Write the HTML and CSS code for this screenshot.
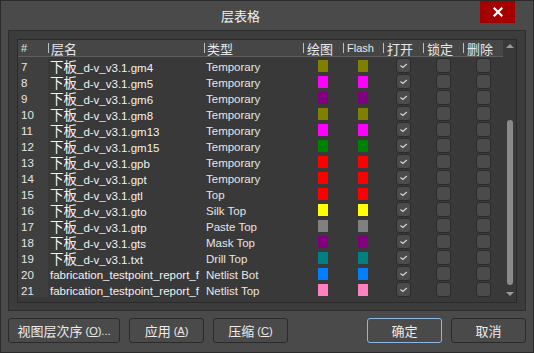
FILE: index.html
```html
<!DOCTYPE html>
<html>
<head>
<meta charset="utf-8">
<link rel="stylesheet" href="styles.css">
</head>
<body>
<div class="window">
  <div class="titlebar">
    <div class="title">层表格</div>
    <div class="close"><svg width="10" height="10" viewBox="0 0 10 10"><path d="M1.5 1.5 L8.5 8.5 M8.5 1.5 L1.5 8.5" stroke="#fff" stroke-width="2.2" stroke-linecap="square"/></svg></div>
  </div>
  <div class="panel">
    <div class="grid">
      <div class="table">
        <div class="hrow">
          <div class="c c-num">#</div>
          <div class="c c-name sep">层名</div>
          <div class="c c-type sep">类型</div>
          <div class="c c-sw sep">绘图</div>
          <div class="c c-sw sep latin">Flash</div>
          <div class="c c-sw sep">打开</div>
          <div class="c c-sw sep">锁定</div>
          <div class="c c-sw sep">删除</div>
        </div>
        <div class="rows" id="rows"></div>
      </div>
      <div class="scrollbar">
        <div class="arrow up"></div>
        <div class="track"><div class="thumb" style="margin-top:72px;height:165px"></div></div>
        <div class="arrow down"></div>
      </div>
    </div>
  </div>
  <div class="buttons">
    <div class="btn w112">视图层次序 <span class="acc">(<u>O</u>)...</span></div>
    <div class="btn w75">应用 <span class="acc">(<u>A</u>)</span></div>
    <div class="btn w75">压缩 <span class="acc">(<u>C</u>)</span></div>
    <div class="spacer"></div>
    <div class="btn w75 default">确定</div>
    <div class="btn w75">取消</div>
  </div>
</div>
<script>
var data = [
 [7,'下板','_d-v_v3.1.gm4','Temporary','#808000'],
 [8,'下板','_d-v_v3.1.gm5','Temporary','#ff00ff'],
 [9,'下板','_d-v_v3.1.gm6','Temporary','#800080'],
 [10,'下板','_d-v_v3.1.gm8','Temporary','#808000'],
 [11,'下板','_d-v_v3.1.gm13','Temporary','#ff00ff'],
 [12,'下板','_d-v_v3.1.gm15','Temporary','#008000'],
 [13,'下板','_d-v_v3.1.gpb','Temporary','#ff0000'],
 [14,'下板','_d-v_v3.1.gpt','Temporary','#ff0000'],
 [15,'下板','_d-v_v3.1.gtl','Top','#ff0000'],
 [16,'下板','_d-v_v3.1.gto','Silk Top','#ffff00'],
 [17,'下板','_d-v_v3.1.gtp','Paste Top','#808080'],
 [18,'下板','_d-v_v3.1.gts','Mask Top','#800080'],
 [19,'下板','_d-v_v3.1.txt','Drill Top','#008080'],
 [20,'','fabrication_testpoint_report_f','Netlist Bot','#0080ff'],
 [21,'','fabrication_testpoint_report_f','Netlist Top','#ff80c0']
];
var check = '<svg width="13" height="13" viewBox="0 0 13 13"><path d="M3.5 6.5 L5.8 8.5 L9.8 5" fill="none" stroke="#d8d8d8" stroke-width="1.2"/></svg>';
var html = '';
data.forEach(function(d){
  html += '<div class="row">' +
    '<div class="c c-num">' + d[0] + '</div>' +
    '<div class="c c-name">' + (d[1] ? '<span class="cjk">' + d[1] + '</span>' : '') + d[2] + '</div>' +
    '<div class="c c-type">' + d[3] + '</div>' +
    '<div class="c c-sw"><span class="sw" style="background:' + d[4] + '"></span></div>' +
    '<div class="c c-sw"><span class="sw" style="background:' + d[4] + '"></span></div>' +
    '<div class="c c-sw"><span class="cb">' + check + '</span></div>' +
    '<div class="c c-sw"><span class="cb"></span></div>' +
    '<div class="c c-sw"><span class="cb"></span></div>' +
    '</div>';
});
document.getElementById('rows').innerHTML = html;
</script>
</body>
</html>
```
FILE: styles.css
```css
* { box-sizing: border-box; }
html, body { margin: 0; padding: 0; background: #4a4a4a; }
body { font-family: "Liberation Sans", "Noto Sans CJK SC", sans-serif; color: #e6e6e6; }
.window {
  width: 534px; height: 353px;
  border: 1px solid #2a2a2a;
  background: #4a4a4a;
  display: flex; flex-direction: column;
}
.titlebar { height: 29px; display: flex; align-items: flex-start; }
.title {
  flex: 1; text-align: center; font-size: 13px; line-height: 29px;
  font-family: "Noto Sans CJK SC", sans-serif; color: #f0f0f0;
}
.close {
  width: 35px; height: 22px; background: #a50000;
  margin-right: 18px; display: flex; align-items: center; justify-content: center;
}
.panel {
  margin-left: 7px; width: 518px; height: 281px;
  background: #3c3c3c; border: 1px solid #2e2e2e;
  padding: 8px 8px 7px 8px;
}
.grid {
  height: 264px; border: 1px solid #2a2a2a; background: #393939;
  display: flex; overflow: hidden;
}
.table { width: 485px; display: flex; flex-direction: column; }
.hrow {
  height: 17px; display: flex; align-items: center;
  background: #464646; border-bottom: 1px solid #5e5e5e;
  font-family: "Noto Sans CJK SC", sans-serif; font-size: 13px; color: #e8e8e8;
}
.hrow .c { height: 16px; line-height: 17px; }
.hrow .c-num { font-family: "Liberation Sans", sans-serif; font-size: 11px; padding-left: 3px; }
.hrow .sep { background-image: linear-gradient(#bdbdbd, #bdbdbd); background-size: 1px 10px; background-position: 0 3px; background-repeat: no-repeat; padding-left: 3px; }
.hrow .latin { font-family: "Liberation Sans", sans-serif; font-size: 11px; }
.c { flex: none; white-space: nowrap; overflow-x: clip; overflow-y: visible; }
.c-num { width: 30px; padding-left: 3px; }
.c-name { width: 156px; padding-left: 2px; }
.c-type { width: 99px; padding-left: 2px; }
.c-sw { width: 40px; display: flex; justify-content: center; align-items: flex-start; }
.hrow .c-sw { display: block; padding-left: 4px; }
.rows { display: flex; flex-direction: column; }
.row { height: 16px; display: flex; align-items: flex-start; font-size: 11.5px; line-height: 16px; }
.row .c { height: 16px; padding-top: 2px; }
.row .c-sw { padding-top: 0; }
.row .c-num { background: #3f3f3f; }
.row .c-name { color: #f2f2f2; }
.cjk { font-family: "Noto Sans CJK SC", sans-serif; font-size: 13.5px; line-height: 14px; }
.sw { width: 10px; height: 12px; display: block; margin-top: 3px; }
.cb {
  width: 15px; height: 15px; display: block; border-radius: 3px;
  background: #4b4b4b; border: 1px solid #2b2b2b; margin-top: 1px;
}
.cb svg { display: block; }
.scrollbar { width: 14px; display: flex; flex-direction: column; align-items: center; background: #393939; }
.arrow { width: 0; height: 0; border-left: 4px solid transparent; border-right: 4px solid transparent; }
.arrow.up { border-bottom: 4px solid #9a9a9a; margin-top: 4px; }
.arrow.down { border-top: 4px solid #9a9a9a; margin-bottom: 6px; }
.track { flex: 1; width: 6px; }
.thumb { width: 6px; background: #8a8a8a; border-radius: 3px; }
.buttons { display: flex; margin-top: 7px; padding-left: 7px; padding-right: 7px; gap: 9px; }
.spacer { flex: 1; }
.btn {
  height: 25px; border: 1px solid #2a2a2a; border-radius: 3px; background: #4a4a4a;
  display: flex; align-items: center; justify-content: center;
  font-family: "Noto Sans CJK SC", sans-serif; font-size: 13px; color: #ececec;
  white-space: nowrap;
}
.acc { font-family: "Liberation Sans", sans-serif; font-size: 11px; margin-left: 3px; }
.w112 { width: 112px; }
.w75 { width: 75px; }
.default { border-color: #8fb6e0; }
```
